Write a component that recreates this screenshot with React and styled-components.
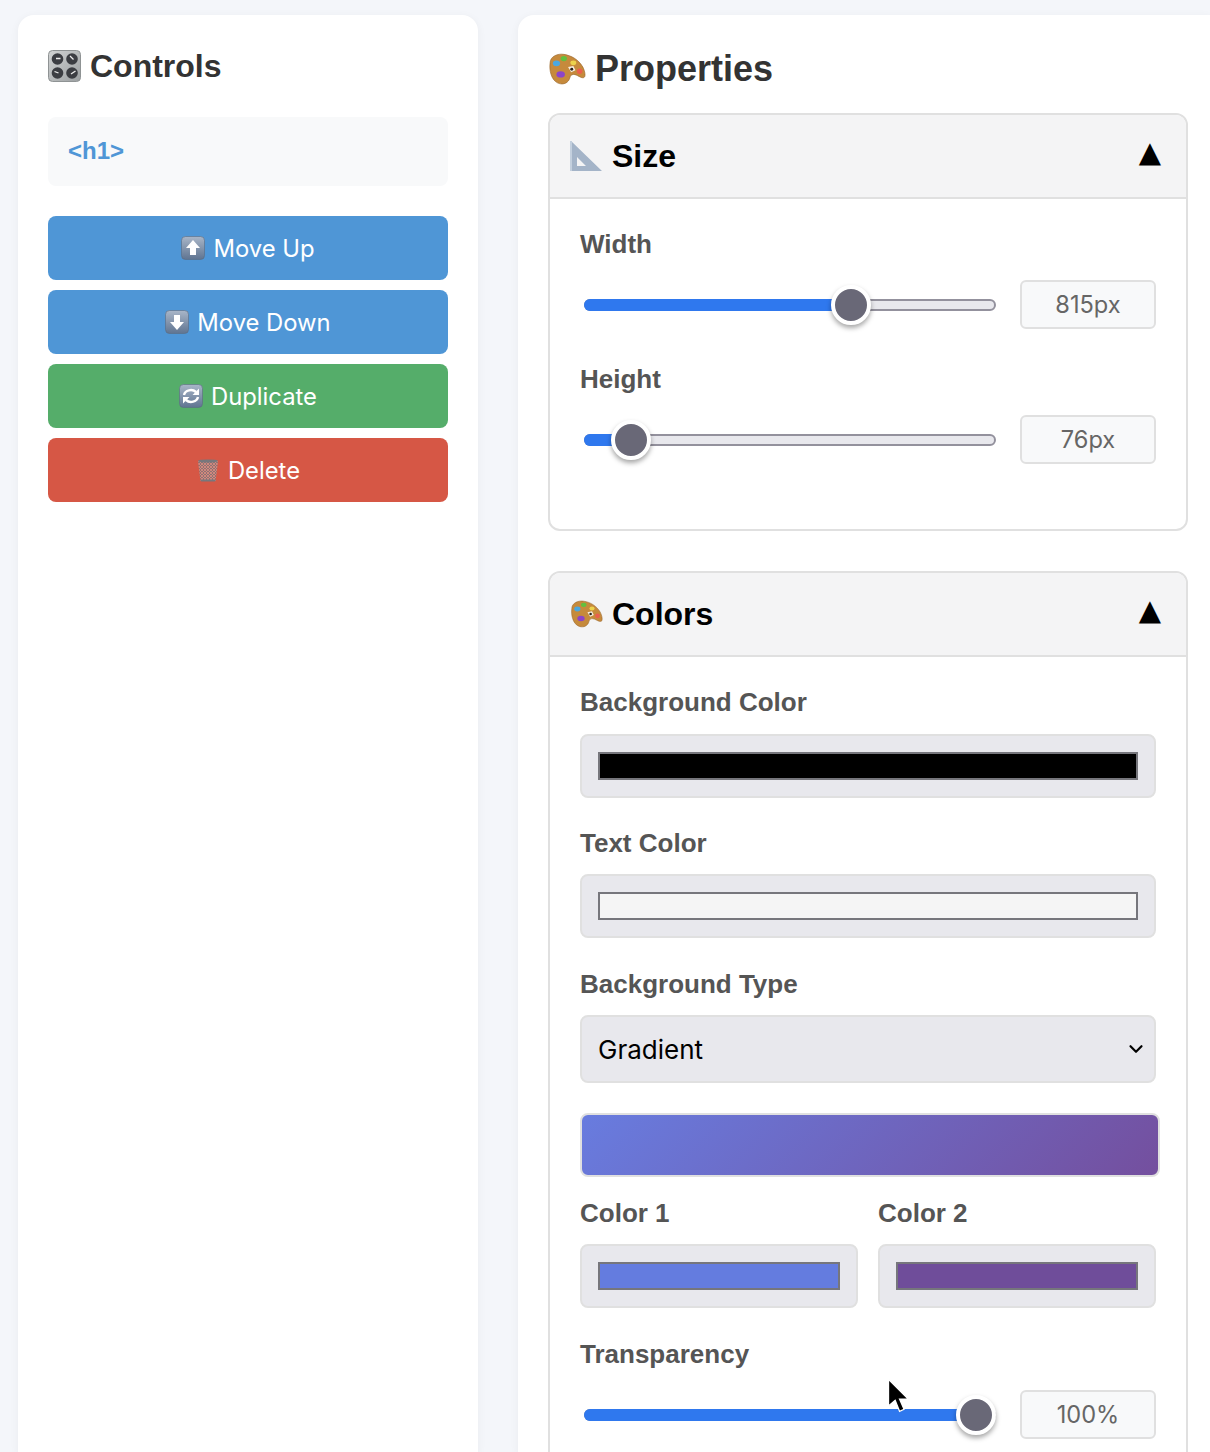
import React from 'react'
import styled, { createGlobalStyle } from 'styled-components'
import { ChevronDown } from 'lucide-react'

const Global = createGlobalStyle`
  html, body {
    margin: 0;
    height: 1452px;
    overflow: hidden;
    background: #f4f6fa;
  }
  * { box-sizing: border-box; }
`

const Page = styled.div`
  display: flex;
  align-items: flex-start;
  gap: 40px;
  width: 1210px;
  height: 1452px;
  overflow: hidden;
  padding: 15px 0 0 18px;
  font-family: "Liberation Sans", Arial, sans-serif;
`
const Card = styled.div`
  flex: none;
  width: ${p => p.$width}px;
  height: 1437px;
  overflow: hidden;
  padding: 30px ${p => p.$right ?? 30}px 30px 30px;
  background: #fff;
  border-radius: 16px ${p => (p.$right ? 0 : 16)}px 0 0;
  box-shadow: 0 2px 10px rgba(0, 0, 0, 0.05);
`
const Title = styled.h2`
  display: flex;
  align-items: center;
  gap: 9px;
  margin: 0 0 ${p => p.$gap}px;
  font-size: ${p => p.$size}px;
  line-height: ${p => p.$line}px;
  font-weight: 700;
  color: #333;
`
const TagBox = styled.div`
  height: 69px;
  padding: 0 20px 2px;
  margin-bottom: 30px;
  display: flex;
  align-items: center;
  background: #f8f9fa;
  border-radius: 8px;
  font-size: 24px;
  font-weight: 700;
  color: #4f96d6;
`
const Buttons = styled.div`
  display: flex;
  flex-direction: column;
  gap: 10px;
`
const Action = styled.button`
  height: 64px;
  display: flex;
  align-items: center;
  justify-content: center;
  gap: 8px;
  border: 0;
  border-radius: 8px;
  background: ${p => p.$bg};
  color: #fff;
  font-family: Inter, sans-serif;
  font-size: 23.8px;
`
const Section = styled.section`
  margin-bottom: 40px;
  border: 2px solid #e0e0e0;
  border-radius: 12px;
`
const SectionHead = styled.div`
  height: 84px;
  padding: 0 25px 0 20px;
  display: flex;
  align-items: center;
  justify-content: space-between;
  background: #f4f4f5;
  border-bottom: 2px solid #e0e0e0;
  border-radius: 10px 10px 0 0;
`
const SectionTitle = styled.h3`
  display: flex;
  align-items: center;
  gap: 9px;
  margin: 0;
  font-size: 32px;
  font-weight: 700;
  color: #000;
`
const Caret = styled.span`
  display: block;
  margin-bottom: 8px;
  font-family: "DejaVu Sans", sans-serif;
  font-size: 29px;
  line-height: 1;
  color: #000;
`
const SectionBody = styled.div`
  padding: 30px 30px 0;
`
const Field = styled.div`
  margin-bottom: ${p => p.$gap ?? 30}px;
`
const Label = styled.label`
  display: block;
  margin-bottom: ${p => p.$gap ?? 16}px;
  font-size: 26px;
  line-height: 30px;
  font-weight: 700;
  color: #555;
`
const SliderRow = styled.div`
  display: flex;
  align-items: center;
  gap: 24px;
  padding: 5px 0 5px 4px;
`
const Track = styled.div`
  position: relative;
  flex: 1;
  height: 12px;
  border: 2px solid #93919d;
  border-radius: 6px;
  background: #e8e8ed;
`
const Fill = styled.div`
  position: absolute;
  left: -2px;
  top: -2px;
  bottom: -2px;
  background: #2f78ee;
  border-radius: 6px 0 0 6px;
`
const Thumb = styled.div`
  position: absolute;
  top: 50%;
  width: 40px;
  height: 40px;
  transform: translate(-50%, -50%);
  border: 4px solid #fff;
  border-radius: 50%;
  background: #696877;
  box-shadow: 0 3px 5px rgba(0, 0, 0, 0.35);
`
const Value = styled.div`
  flex: none;
  width: 136px;
  height: 49px;
  display: flex;
  align-items: center;
  justify-content: center;
  background: #f8f9fa;
  border: 2px solid #e0e0e0;
  border-radius: 6px;
  font-family: Inter, sans-serif;
  font-size: 23.6px;
  color: #666;
`
const ColorBox = styled.div`
  height: 64px;
  padding: 16px;
  background: #e8e8ed;
  border: 2px solid #e0e0e0;
  border-radius: 8px;
`
const ColorFill = styled.div`
  height: 100%;
  background: ${p => p.$color};
  border: 2px solid #76767c;
`
const SelectWrap = styled.div`
  position: relative;
  height: 68px;
`
const Select = styled.select`
  width: 100%;
  height: 100%;
  padding: 0 16px;
  appearance: none;
  background: #e8e8ed;
  border: 2px solid #e0e0e0;
  border-radius: 8px;
  font-family: Inter, sans-serif;
  font-size: 26px;
  color: #000;
`
const Chevron = styled(ChevronDown)`
  position: absolute;
  top: 23px;
  right: 9px;
  pointer-events: none;
`
const Gradient = styled.div`
  width: 580px;
  height: 64px;
  margin-bottom: 21px;
  background: linear-gradient(135deg, #687cdf 0%, #744f9e 100%);
  border: 2px solid #e0e0e0;
  border-radius: 8px;
`
const Pair = styled.div`
  display: grid;
  grid-template-columns: 1fr 1fr;
  gap: 20px;
  margin-bottom: 31px;
`
const Cursor = styled.svg`
  position: absolute;
  left: 885px;
  top: 1377px;
`

const Glyph = styled.svg`
  flex: none;
  display: block;
`

const Knobs = () => (
  <Glyph width="33" height="32" viewBox="0 0 33 32">
    <defs>
      <linearGradient id="plate" x1="0" y1="0" x2="1" y2="1">
        <stop offset="0" stopColor="#d2d4d4" />
        <stop offset="1" stopColor="#9b9fa1" />
      </linearGradient>
    </defs>
    <rect x="0.5" y="0.5" width="32" height="31" rx="4" fill="url(#plate)" stroke="#8f9394" />
    <circle cx="9.5" cy="9" r="5.8" fill="#3b3d42" />
    <path d="M8 8.5h4.5" stroke="#eee" strokeWidth="1.3" />
    <circle cx="24" cy="9" r="5.8" fill="#3b3d42" />
    <path d="M22 6l3.5 3.5" stroke="#eee" strokeWidth="1.3" />
    <circle cx="9.5" cy="23" r="5.8" fill="#3b3d42" />
    <path d="M6.5 21.5l4 1.5" stroke="#eee" strokeWidth="1.3" />
    <circle cx="24" cy="23" r="5.8" fill="#3b3d42" />
    <path d="M23 24l4.5-3" stroke="#eee" strokeWidth="1.3" />
  </Glyph>
)

const Palette = ({ size }) => (
  <Glyph width={size} height={size * 0.85} viewBox="0 0 36 30">
    <path d="M2 9C2 3 9 0 15 1c7 1 14 5 18 12 2 4 3 9 1 10-3 1-6-3-10-3-3 0-3 3-4 5-2 4-7 5-11 3C3 25 1 16 2 9z" fill="#c68a3c" stroke="#98652a" strokeWidth="0.6" />
    <ellipse cx="8" cy="9.5" rx="3.4" ry="2.7" fill="#4aa8e0" />
    <ellipse cx="15" cy="5" rx="3" ry="2.4" fill="#63bf3f" />
    <ellipse cx="24" cy="9" rx="2.8" ry="2.2" fill="#ecd24c" />
    <ellipse cx="30" cy="17" rx="2.6" ry="2.6" fill="#ea5f4d" />
    <ellipse cx="12" cy="20" rx="4" ry="3" fill="#8c45c8" />
    <path d="M19 13l5-1 2 4-4 2z" fill="#f6efe2" />
    <circle cx="22.5" cy="15" r="1.4" fill="#2a2118" />
  </Glyph>
)

const SetSquare = () => (
  <Glyph width="33" height="32" viewBox="0 0 33 32">
    <path fillRule="evenodd" d="M1 1l31 30H1zM7 17v9h9z" fill="#a4b4c8" />
    <path d="M1 1v30" stroke="#c4d0de" strokeWidth="2" />
  </Glyph>
)

const KeyCap = ({ children }) => (
  <Glyph width="24" height="24" viewBox="0 0 24 24">
    <defs>
      <linearGradient id="cap" x1="0" y1="0" x2="0" y2="1">
        <stop offset="0" stopColor="#a9b6c8" />
        <stop offset="1" stopColor="#5f7491" />
      </linearGradient>
    </defs>
    <rect x="0.5" y="0.5" width="23" height="23" rx="4" fill="url(#cap)" stroke="#5a6b82" strokeWidth="0.6" />
    {children}
  </Glyph>
)

const UpArrow = () => (
  <KeyCap><path d="M12 4l7 8h-4v7H9v-7H5z" fill="#fff" /></KeyCap>
)
const DownArrow = () => (
  <KeyCap><path d="M12 20l-7-8h4V5h6v7h4z" fill="#fff" /></KeyCap>
)
const Cycle = () => (
  <KeyCap>
    <path d="M5 11a7 6 0 0 1 12-3" fill="none" stroke="#fff" strokeWidth="2.4" />
    <path d="M20 4.5v6.5h-6.5z" fill="#fff" />
    <path d="M19 13a7 6 0 0 1-12 3" fill="none" stroke="#fff" strokeWidth="2.4" />
    <path d="M4 19.5V13h6.5z" fill="#fff" />
  </KeyCap>
)
const Basket = () => (
  <Glyph width="24" height="24" viewBox="0 0 24 24">
    <defs>
      <pattern id="mesh" width="3" height="3" patternUnits="userSpaceOnUse">
        <path d="M0 0l3 3M3 0L0 3" stroke="#e08a80" strokeWidth="0.8" />
      </pattern>
    </defs>
    <path d="M2 3h20l-2.5 20h-15z" fill="#8e7472" />
    <path d="M2 3h20l-2.5 20h-15z" fill="url(#mesh)" />
    <ellipse cx="12" cy="3" rx="10" ry="1.6" fill="#77777c" />
    <rect x="4.5" y="21.5" width="15" height="2" rx="1" fill="#77777c" />
  </Glyph>
)

const Slider = ({ ratio, value }) => {
  const left = `calc(16px + ${ratio} * (100% - 32px))`
  return (
    <SliderRow>
      <Track>
        <Fill style={{ width: left }} />
        <Thumb style={{ left }} />
      </Track>
      <Value>{value}</Value>
    </SliderRow>
  )
}

const App = () => (
  <>
    <Global />
    <Page>
      <Card $width={460}>
        <Title $size={32} $line={42} $gap={30}><Knobs />Controls</Title>
        <TagBox>&lt;h1&gt;</TagBox>
        <Buttons>
          <Action $bg="#4f96d6"><UpArrow />Move Up</Action>
          <Action $bg="#4f96d6"><DownArrow />Move Down</Action>
          <Action $bg="#55ad6a"><Cycle />Duplicate</Action>
          <Action $bg="#d65745"><Basket />Delete</Action>
        </Buttons>
      </Card>

      <Card $width={692} $right={22}>
        <Title $size={36} $line={48} $gap={20}><Palette size={38} />Properties</Title>

        <Section>
          <SectionHead>
            <SectionTitle><SetSquare />Size</SectionTitle>
            <Caret>▲</Caret>
          </SectionHead>
          <SectionBody>
            <Field>
              <Label>Width</Label>
              <Slider ratio={0.662} value="815px" />
            </Field>
            <Field $gap={60}>
              <Label>Height</Label>
              <Slider ratio={0.077} value="76px" />
            </Field>
          </SectionBody>
        </Section>

        <Section>
          <SectionHead>
            <SectionTitle><Palette size={33} />Colors</SectionTitle>
            <Caret>▲</Caret>
          </SectionHead>
          <SectionBody>
            <Field>
              <Label $gap={17}>Background Color</Label>
              <ColorBox><ColorFill $color="#000" /></ColorBox>
            </Field>
            <Field $gap={31}>
              <Label>Text Color</Label>
              <ColorBox><ColorFill $color="#f5f5f5" /></ColorBox>
            </Field>
            <Field>
              <Label>Background Type</Label>
              <SelectWrap>
                <Select defaultValue="gradient">
                  <option value="gradient">Gradient</option>
                </Select>
                <Chevron size={22} strokeWidth={2.4} color="#000" />
              </SelectWrap>
            </Field>
            <Gradient />
            <Pair>
              <div>
                <Label>Color 1</Label>
                <ColorBox><ColorFill $color="#647cdf" /></ColorBox>
              </div>
              <div>
                <Label>Color 2</Label>
                <ColorBox><ColorFill $color="#6f4d9a" /></ColorBox>
              </div>
            </Pair>
            <Field>
              <Label>Transparency</Label>
              <Slider ratio={0.995} value="100%" />
            </Field>
          </SectionBody>
        </Section>
      </Card>
    </Page>
    <Cursor width="27" height="40" viewBox="0 0 24 36">
      <path d="M3 2v24l6-5 4 10 4-2-4-9h8z" fill="#000" stroke="#fff" strokeWidth="1.2" />
    </Cursor>
  </>
)

export default App
